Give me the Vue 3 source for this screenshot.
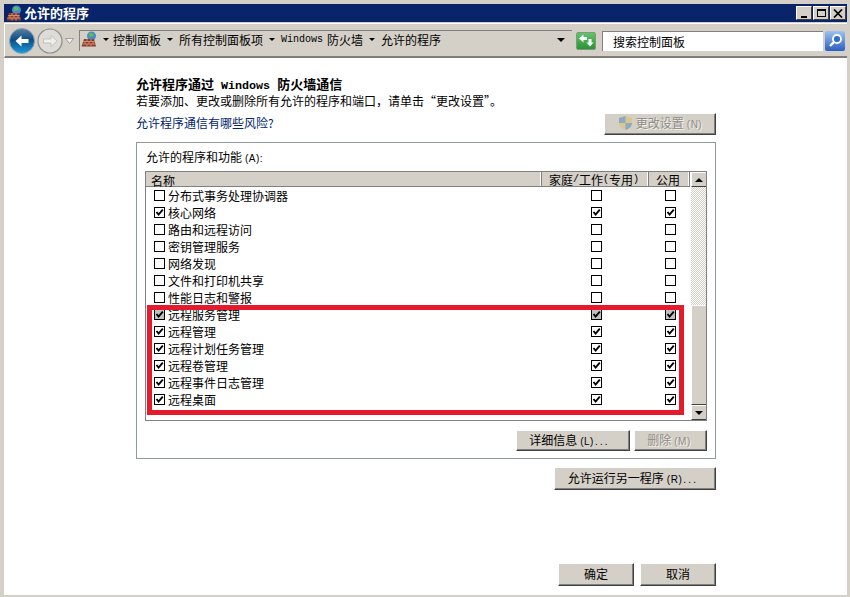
<script setup>
const rows = [
  { name: '分布式事务处理协调器', a: 0, b: 0, c: 0 },
  { name: '核心网络', a: 1, b: 1, c: 1 },
  { name: '路由和远程访问', a: 0, b: 0, c: 0 },
  { name: '密钥管理服务', a: 0, b: 0, c: 0 },
  { name: '网络发现', a: 0, b: 0, c: 0 },
  { name: '文件和打印机共享', a: 0, b: 0, c: 0 },
  { name: '性能日志和警报', a: 0, b: 0, c: 0 },
  { name: '远程服务管理', a: 2, b: 2, c: 2 },
  { name: '远程管理', a: 1, b: 1, c: 1 },
  { name: '远程计划任务管理', a: 1, b: 1, c: 1 },
  { name: '远程卷管理', a: 1, b: 1, c: 1 },
  { name: '远程事件日志管理', a: 1, b: 1, c: 1 },
  { name: '远程桌面', a: 1, b: 1, c: 1 },
]
</script>

<template>
  <div class="window">
    <div class="titlebar">
      <svg class="ficon" width="17" height="17" viewBox="0 0 17 17">
        <circle cx="10.5" cy="5" r="4.5" fill="#3f8fd0" />
        <path d="M7.5 2.5 Q10.5 0.5 13 3.5 Q11 6.5 8.5 5.5Z" fill="#6cb84a" />
        <path d="M3 8 H13 L15 15.5 H0.5Z" fill="#8e3b24" />
        <path d="M2.2 10.5h11.4M1.4 13h13M6 8v2.5M10 8v2.5M4 10.5v2.5M8 10.5v2.5M12 10.5v2.5M6 13v2.5M10 13v2.5" stroke="#c98d74" stroke-width="1" fill="none" />
      </svg>
      <span class="title">允许的程序</span>
      <div class="winbtns">
        <div class="winbtn"><i class="min"></i></div>
        <div class="winbtn"><i class="max"></i></div>
        <div class="winbtn"><svg width="10" height="9" viewBox="0 0 10 9"><path d="M1 0.5 L9 8.5 M9 0.5 L1 8.5" stroke="#000" stroke-width="1.7" /></svg></div>
      </div>
    </div>

    <div class="toolbar">
      <svg class="nav" width="26" height="26" viewBox="0 0 26 26">
        <defs>
          <linearGradient id="bk" x1="0" y1="0" x2="0" y2="1">
            <stop offset="0" stop-color="#5d7f9e" />
            <stop offset=".45" stop-color="#0c4d86" />
            <stop offset="1" stop-color="#1b9ddd" />
          </linearGradient>
        </defs>
        <circle cx="13" cy="13" r="12.5" fill="url(#bk)" stroke="#8fa4b6" />
        <path d="M6.5 13 L12.5 7.5 V11 H19.5 V15 H12.5 V18.5Z" fill="#fff" />
      </svg>
      <svg class="nav nav2" width="26" height="26" viewBox="0 0 26 26">
        <circle cx="13" cy="13" r="12" fill="#dddcd8" stroke="#8f8e8a" stroke-width="1.2" />
        <path d="M20 13 L14 7.5 V11 H6.5 V15 H14 V18.5Z" fill="#f0efec" stroke="#b5b4b0" stroke-width=".7" />
      </svg>
      <svg class="navdrop" width="9" height="6" viewBox="0 0 9 6"><path d="M0.5 0.5 H8.5 L4.5 5.5Z" fill="#f2f1ee" stroke="#8f8e8a" stroke-width=".8" /></svg>
      <div class="address">
        <svg class="ficon" width="17" height="17" viewBox="0 0 17 17">
          <circle cx="10.5" cy="5" r="4.5" fill="#3f8fd0" />
          <path d="M7.5 2.5 Q10.5 0.5 13 3.5 Q11 6.5 8.5 5.5Z" fill="#6cb84a" />
          <path d="M3 8 H13 L15 15.5 H0.5Z" fill="#8e3b24" />
          <path d="M2.2 10.5h11.4M1.4 13h13M6 8v2.5M10 8v2.5M4 10.5v2.5M8 10.5v2.5M12 10.5v2.5M6 13v2.5M10 13v2.5" stroke="#c98d74" stroke-width="1" fill="none" />
        </svg>
        <i class="tri crumb1"></i><span>控制面板</span>
        <i class="tri crumb"></i><span>所有控制面板项</span>
        <i class="tri crumb"></i><span class="mono">Windows</span><span class="fire">防火墙</span>
        <i class="tri crumb"></i><span>允许的程序</span>
        <i class="tri end"></i>
      </div>
      <div class="go">
        <svg width="15" height="13" viewBox="0 0 15 13"><path d="M0 4.5 L4.5 0.5 V3 H8 V6 H4.5 V8.5Z M11 12.5 L7.5 8.5 H9.5 V5 H12.5 V8.5 H14.5Z" fill="#fff" /></svg>
      </div>
      <div class="search">搜索控制面板</div>
      <div class="searchbtn">
        <svg width="15" height="15" viewBox="0 0 15 15"><circle cx="9" cy="6" r="4" fill="#2f6fc6" stroke="#fff" stroke-width="1.8" /><path d="M6 9 L2 13" stroke="#fff" stroke-width="2.4" /></svg>
      </div>
    </div>

    <div class="content">
      <div class="column">
        <div class="h1">允许程序通过<span class="mono bold">Windows</span>防火墙通信</div>
        <div class="para">若要添加、更改或删除所有允许的程序和端口，请单击“更改设置”。</div>
        <div class="linkrow">
          <span class="link">允许程序通信有哪些风险?</span>
          <button class="btn disabled change">
            <svg width="15" height="16" viewBox="0 0 15 16"><path d="M7.5 1 L14 3 V8 Q14 13 7.5 15 Q1 13 1 8 V3Z" fill="#d9c88c" /><path d="M7.5 1 V8 H1 V3Z M7.5 8 H14 Q14 13 7.5 15Z" fill="#8fa9c4" /></svg>
            <span>更改设置<span class="lat">(N)</span></span>
          </button>
        </div>

        <div class="panel">
          <div class="label">允许的程序和功能<span class="lat">(A):</span></div>
          <div class="list">
            <div class="rows">
              <div class="header">
                <div class="hcell first">名称</div>
                <div class="hcell center">家庭<span class="mono">/</span>工作<span class="mono">(</span>专用<span class="mono">)</span></div>
                <div class="hcell center">公用</div>
              </div>
              <div v-for="r in rows" :key="r.name" class="row">
                <div class="namecell">
                  <span class="cb" :class="{ grey: r.a === 2 }"><svg v-if="r.a" width="9" height="9" viewBox="0 0 9 9"><path d="M1.5 4 L3.6 6.5 L7.8 1.6" fill="none" stroke="#000" stroke-width="1.9" /></svg></span>
                  <span>{{ r.name }}</span>
                </div>
                <div class="center cell"><span class="cb" :class="{ grey: r.b === 2 }"><svg v-if="r.b" width="9" height="9" viewBox="0 0 9 9"><path d="M1.5 4 L3.6 6.5 L7.8 1.6" fill="none" stroke="#000" stroke-width="1.9" /></svg></span></div>
                <div class="center cell"><span class="cb" :class="{ grey: r.c === 2 }"><svg v-if="r.c" width="9" height="9" viewBox="0 0 9 9"><path d="M1.5 4 L3.6 6.5 L7.8 1.6" fill="none" stroke="#000" stroke-width="1.9" /></svg></span></div>
              </div>
              <div class="redbox"></div>
            </div>
            <div class="scroll">
              <div class="sbtn"><i class="up"></i></div>
              <div class="track"></div>
              <div class="thumb"></div>
              <div class="sbtn"><i class="down"></i></div>
            </div>
          </div>
          <div class="panelbtns">
            <button class="btn details"><span>详细信息<span class="lat">(L)</span><span class="lat dots">...</span></span></button>
            <button class="btn disabled remove"><span>删除<span class="lat">(M)</span></span></button>
          </div>
        </div>

        <div class="another"><button class="btn anotherbtn"><span>允许运行另一程序<span class="lat">(R)</span><span class="lat dots">...</span></span></button></div>
        <div class="footer">
          <button class="btn ok">确定</button>
          <button class="btn ok">取消</button>
        </div>
      </div>
    </div>
  </div>
</template>

<style scoped>
.window {
  width: 850px;
  height: 597px;
  box-sizing: border-box;
  background: #d4d0c8;
  padding: 4px 3px 2px 4px;
  font-family: "Noto Sans CJK SC", "Liberation Sans", sans-serif;
  font-size: 12px;
  color: #000;
  display: flex;
  flex-direction: column;
  overflow: hidden;
}
.mono { font-family: "Liberation Mono", monospace; font-size: 10px; }
.mono.bold { font-size: 11.7px; font-weight: 700; margin: 0 7px; }
.lat { font-family: "Liberation Sans", sans-serif; font-size: 10px; letter-spacing: .5px; margin-left: 3px; }
.dots { letter-spacing: 2.2px; margin-left: 1px; }
.fire { margin-left: 4px; }
.titlebar {
  height: 18px;
  background: #0a246a;
  display: flex;
  align-items: center;
  color: #fff;
  padding: 0 1px 0 2px;
  flex: none;
}
.title { font-weight: 700; font-size: 13px; margin-left: 1px; line-height: 18px; }
.winbtns { margin-left: auto; display: flex; gap: 1px; }
.winbtn {
  width: 16px;
  height: 14px;
  box-sizing: border-box;
  background: #d4d0c8;
  border: 1px solid;
  border-color: #fff #404040 #404040 #fff;
  display: flex;
  align-items: center;
  justify-content: center;
}
.min { width: 6px; height: 2px; background: #000; margin-top: 7px; }
.max { width: 9px; height: 8px; box-sizing: border-box; border: 1px solid #000; border-top-width: 2px; }
.toolbar {
  height: 35px;
  margin-top: 1px;
  flex: none;
  box-sizing: border-box;
  border-top: 1px solid #fff;
  border-bottom: 2px solid #807d78;
  border-left: 1px solid #fff;
  display: flex;
  align-items: center;
  padding: 1px 0 0 4px;
  background: #d4d0c8;
}
.nav { flex: none; }
.nav2 { margin-left: 2px; }
.navdrop { margin-left: 2px; flex: none; }
.address {
  margin-left: 5px;
  width: 493px;
  height: 21px;
  border-left: 1px solid #808080;
  border-top: 1px solid #808080;
  display: flex;
  align-items: center;
  box-sizing: border-box;
  padding: 0 0 3px 1px;
  white-space: nowrap;
  flex: none;
}
.tri {
  width: 0;
  height: 0;
  border-left: 3px solid transparent;
  border-right: 3px solid transparent;
  border-top: 3px solid #000;
  flex: none;
}
.crumb1 { margin: 0 4px 0 5px; }
.crumb { margin: 0 6px; }
.end { margin-left: auto; margin-right: 7px; border-left-width: 4px; border-right-width: 4px; border-top-width: 4px; }
.go {
  width: 20px;
  height: 18px;
  margin-left: 4px;
  flex: none;
  background: linear-gradient(#62c46a, #2c9138);
  border: 1px solid #7c9a7e;
  border-radius: 2px;
  box-sizing: border-box;
  display: flex;
  align-items: center;
  justify-content: center;
}
.search {
  margin-left: 6px;
  width: 221px;
  height: 20px;
  flex: none;
  box-sizing: border-box;
  background: #fff;
  border-left: 1px solid #808080;
  border-top: 1px solid #808080;
  padding-left: 10px;
  line-height: 19px;
}
.searchbtn {
  margin-left: 2px;
  width: 20px;
  height: 20px;
  flex: none;
  border-radius: 2px;
  background: linear-gradient(#9fc2ec, #2a5fc0);
  display: flex;
  align-items: center;
  justify-content: center;
}
.content {
  flex: 1;
  background: #fff;
  min-height: 0;
}
.column {
  width: 580px;
  margin-left: 132px;
  padding-top: 17px;
}
.h1 { font-weight: 700; font-size: 13px; line-height: 17px; height: 17px; white-space: nowrap; }
.para { line-height: 17px; height: 17px; font-feature-settings: "fwid"; white-space: nowrap; }
.linkrow { display: flex; justify-content: space-between; align-items: flex-start; margin-top: 3px; height: 30px; }
.link { color: #00246e; line-height: 17px; margin-top: 2px; }
.btn {
  font-family: inherit;
  font-size: 12px;
  color: #000;
  background: #d4d0c8;
  border: 1px solid;
  border-color: #fff #404040 #404040 #fff;
  box-shadow: inset -1px -1px 0 #808080;
  padding: 0 0 3px;
  display: flex;
  align-items: center;
  justify-content: center;
  gap: 3px;
  box-sizing: border-box;
}
.disabled { color: #8f8c86; text-shadow: 1px 1px 0 #f4f2ee; }
.change { width: 112px; height: 22px; margin-top: 1px; }
.panel {
  box-sizing: border-box;
  height: 317px;
  border: 1px solid #919b9c;
  padding: 5px 8px 0 8px;
}
.label { line-height: 17px; height: 17px; margin-left: 1px; }
.list {
  margin-top: 6px;
  width: 562px;
  height: 250px;
  box-sizing: border-box;
  border: 1px solid #808080;
  display: flex;
  overflow: hidden;
}
.rows { width: 544px; position: relative; flex: none; }
.header {
  display: grid;
  grid-template-columns: 395px 107px 41px;
  height: 14px;
  line-height: 17px;
  background: #d4d0c8;
  border-bottom: 1px solid #808080;
}
.hcell { height: 14px; border-right: 1px solid #fff; box-shadow: 1px 0 0 #808080; white-space: nowrap; }
.first { padding-left: 5px; }
.center { display: flex; align-items: center; justify-content: center; }
.hcell.center { padding-top: 1px; box-sizing: border-box; }
.cell { padding-left: 4px; }
.row {
  display: grid;
  grid-template-columns: 395px 107px 41px;
  height: 17px;
  align-items: center;
  line-height: 17px;
}
.namecell { display: flex; align-items: center; padding-left: 8px; gap: 3px; white-space: nowrap; }
.cb {
  width: 11px;
  height: 11px;
  box-sizing: border-box;
  border: 1px solid #000;
  background: #fff;
  display: inline-flex;
  align-items: center;
  justify-content: center;
  flex: none;
}
.cb.grey { background: #c0c0c0; }
.redbox {
  position: absolute;
  left: 1px;
  top: 133px;
  width: 537px;
  height: 110px;
  box-sizing: border-box;
  border: 5px solid #e31b2c;
}
.scroll { width: 16px; margin-left: 1px; display: flex; flex-direction: column; flex: none; }
.sbtn {
  height: 15px;
  flex: none;
  box-sizing: border-box;
  background: #d4d0c8;
  border: 1px solid;
  border-color: #fff #404040 #404040 #fff;
  display: flex;
  align-items: center;
  justify-content: center;
}
.up, .down { width: 0; height: 0; border-left: 4px solid transparent; border-right: 4px solid transparent; }
.up { border-bottom: 4px solid #000; }
.down { border-top: 4px solid #000; }
.track {
  height: 118px;
  flex: none;
  background-color: #fff;
  background-image: repeating-conic-gradient(#d4d0c8 0 25%, #fff 0 50%);
  background-size: 2px 2px;
}
.thumb {
  flex: 1;
  box-sizing: border-box;
  background: #d4d0c8;
  border: 1px solid;
  border-color: #fff #404040 #404040 #fff;
}
.panelbtns { display: flex; justify-content: flex-end; gap: 4px; margin-top: 9px; }
.details { width: 114px; height: 21px; padding-right: 7px; }
.remove { width: 73px; height: 21px; padding-right: 3px; }
.another { display: flex; justify-content: flex-end; margin-top: 8px; }
.anotherbtn { width: 162px; height: 23px; padding-right: 4px; }
.footer { display: flex; justify-content: flex-end; gap: 6px; margin-top: 73px; }
.ok { width: 76px; height: 23px; }
</style>
